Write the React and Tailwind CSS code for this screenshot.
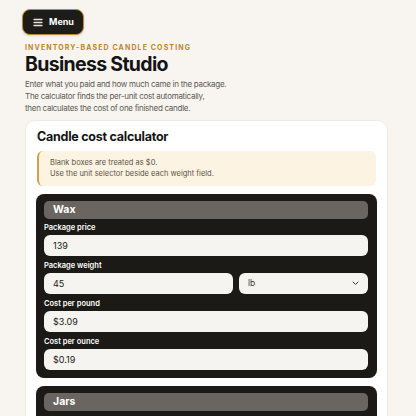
import React from "react";

const Field = ({ label, children }) => (
  <div className="flex flex-col gap-[3px]">
    <span className="text-[7.5px] font-semibold text-white leading-[8px]">{label}</span>
    {children}
  </div>
);

const Box = ({ value, className = "" }) => (
  <div
    className={`h-[21px] rounded-[6px] bg-[#f6f4f0] px-[9px] flex items-center text-[9px] text-[#1c1b18] ${className}`}
  >
    {value}
  </div>
);

const SectionHead = ({ title }) => (
  <div className="h-[18px] rounded-[5px] bg-[#6a6561] px-[9px] flex items-center text-[10.5px] font-bold text-white">
    {title}
  </div>
);

export default function App() {
  return (
    <div
      className="h-[416px] overflow-hidden bg-[#f8f5f0] pl-[25px] pr-[28px] pt-[9px]"
      style={{ fontFamily: "Inter, 'Liberation Sans', sans-serif" }}
    >
      <button className="flex items-center gap-[6px] h-[26px] pl-[10px] pr-[9px] rounded-[8px] bg-[#1e1c19] border border-[#b88a3e] text-white text-[9px] font-bold -ml-[3px] shadow-sm">
        <svg width="10" height="9" viewBox="0 0 10 9" fill="none">
          <path d="M1 1.5h8M1 4.5h8M1 7.5h8" stroke="#e8e4dc" strokeWidth="1.3" strokeLinecap="round" />
        </svg>
        Menu
      </button>

      <div className="mt-[9px] text-[7px] font-bold tracking-[0.16em] text-[#b8862e] leading-[8px]">
        INVENTORY-BASED CANDLE COSTING
      </div>
      <h1 className="mt-[1px] text-[19.5px] font-bold tracking-[-0.035em] text-[#141414] leading-[22px]">
        Business Studio
      </h1>
      <div className="mt-[3px] text-[8px] tracking-[-0.035em] leading-[12px] text-[#5e5953]">
        <p>Enter what you paid and how much came in the package.</p>
        <p>The calculator finds the per-unit cost automatically,</p>
        <p>then calculates the cost of one finished candle.</p>
      </div>

      <div className="mt-[6px] rounded-[10px] bg-white border border-[#efebe4] px-[10px] pt-[6px] pb-[10px]">
        <h2 className="pl-[1px] text-[12.5px] font-bold tracking-[-0.02em] text-[#141414] leading-[20px]">
          Candle cost calculator
        </h2>
        <div className="mt-[4px] mx-[1px] rounded-[6px] bg-[#fdf3e2] border-l-2 border-[#d4a04a] px-[11px] py-[7px] text-[7.5px] leading-[10.5px] text-[#5c5346]">
          <p>Blank boxes are treated as $0.</p>
          <p>Use the unit selector beside each weight field.</p>
        </div>

        <div className="mt-[8px] rounded-[8px] bg-[#1b1a17] pl-[8px] pr-[9px] pt-[7px] pb-[8px] flex flex-col gap-[5px]">
          <SectionHead title="Wax" />
          <div className="flex flex-col gap-[6px]">
            <Field label="Package price">
              <Box value="139" />
            </Field>
            <Field label="Package weight">
              <div className="flex gap-[6px]">
                <Box value="45" className="flex-1" />
                <div className="w-[129px] h-[21px] rounded-[6px] bg-[#f6f4f0] px-[9px] flex items-center justify-between text-[8.5px] text-[#3a3833]">
                  <span>lb</span>
                  <svg width="7" height="5" viewBox="0 0 7 5" fill="none">
                    <path d="M1 1l2.5 2.5L6 1" stroke="#3a3833" strokeWidth="1" strokeLinecap="round" strokeLinejoin="round" />
                  </svg>
                </div>
              </div>
            </Field>
            <Field label="Cost per pound">
              <Box value="$3.09" />
            </Field>
            <Field label="Cost per ounce">
              <Box value="$0.19" />
            </Field>
          </div>
        </div>

        <div className="mt-[8px] rounded-[8px] bg-[#1b1a17] pl-[8px] pr-[9px] pt-[7px] pb-[8px] flex flex-col gap-[5px]">
          <SectionHead title="Jars" />
          <div className="h-[40px]" />
        </div>
      </div>
    </div>
  );
}
